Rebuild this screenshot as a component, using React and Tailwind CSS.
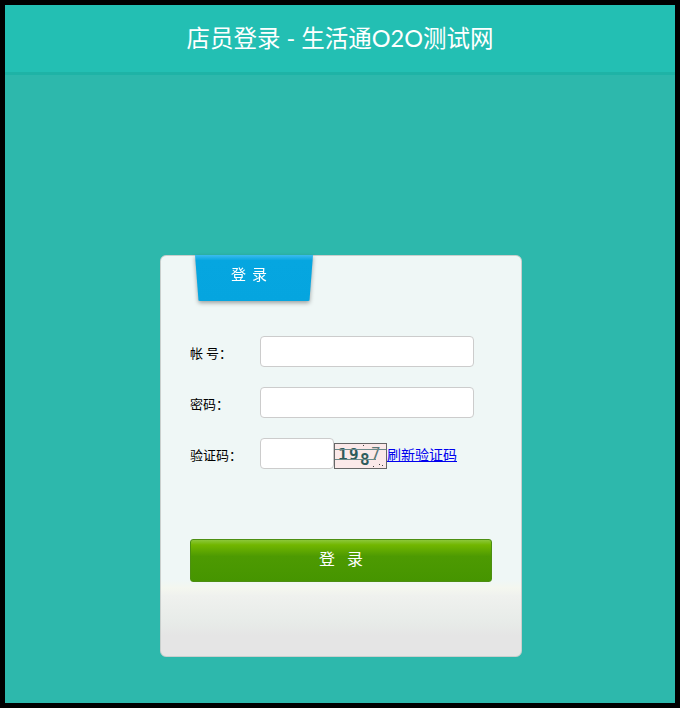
export default function App() {
    const font = { fontFamily: '"Noto Sans CJK SC", sans-serif' };
    return (
        <div className="w-[680px] h-[708px] bg-black p-[5px]">
            <div className="flex flex-col h-full">
                {/* 顶部标题 */}
                <header className="h-[70px] shrink-0 bg-[#23bfb3] border-b-[3px] border-[#1eb3a6] flex items-center justify-center">
                    <h1 className="text-white text-[23.5px] font-['Lato','Noto_Sans_CJK_SC',sans-serif] leading-none">
                        店员登录 - 生活通O2O测试网
                    </h1>
                </header>

                <div className="flex-1 bg-[#2db8ac] pt-[180px] pl-[155px]">
                    {/* 登录卡片 */}
                    <div className="w-[362px] h-[402px] rounded-[6px] border border-[#c9cfcd] bg-[linear-gradient(to_bottom,#eff7f6_0%,#eff7f6_81%,#f4f7ef_83%,#eff1ee_85%,#e8ece9_91%,#e5e5e5_95%,#e5e5e5_100%)] flex flex-col">
                        <div className="ml-[34px] w-[120px] -mt-px drop-shadow-[0_2px_2px_rgba(0,0,0,0.35)]">
                            <div
                                className="w-[118px] h-[46px] bg-[linear-gradient(to_bottom,#3cbbef_0%,#06a6e0_12%,#05a5df_100%)] rounded-b-[5px] flex items-center justify-center text-white text-[15px] tracking-[6px] [clip-path:polygon(0_0,100%_0,97%_100%,3%_100%)]"
                                style={font}
                            >
                                <span className="-mt-[8px] -ml-[4px]">登录</span>
                            </div>
                        </div>

                        <div className="pl-[29px] pt-[35px] flex flex-col gap-[20px] text-[13px] text-black" style={font}>
                            <div className="flex items-center h-[31px]">
                                <span className="w-[70px] pt-[2px]">帐 号：</span>
                                <input className="w-[214px] h-[31px] bg-white border border-[#cccccc] rounded-[4px] outline-none" />
                            </div>
                            <div className="flex items-center h-[31px]">
                                <span className="w-[70px] pt-[2px]">密码：</span>
                                <input type="password" className="w-[214px] h-[31px] bg-white border border-[#cccccc] rounded-[4px] outline-none" />
                            </div>
                            <div className="flex items-center h-[31px]">
                                <span className="w-[70px] pt-[2px]">验证码：</span>
                                <input className="w-[74px] h-[31px] bg-white border border-[#cccccc] rounded-[4px] outline-none" />
                                {/* 验证码图片 */}
                                <div className="relative w-[53px] h-[26px] mt-[4px] bg-[#fbe9e9] border border-[#666] overflow-hidden">
                                    <span className="absolute left-[3px] top-[3px] text-[#2f5c5c] font-['DejaVu_Sans_Mono',monospace] font-bold text-[16px] leading-none">
                                        1
                                    </span>
                                    <span className="absolute left-[14px] top-[3px] text-[#2f5c5c] font-['DejaVu_Sans_Mono',monospace] font-bold text-[16px] leading-none">
                                        9
                                    </span>
                                    <span className="absolute left-[25px] top-[8px] text-[#2f5c5c] font-['DejaVu_Sans_Mono',monospace] font-bold text-[16px] leading-none">
                                        8
                                    </span>
                                    <span className="absolute left-[36px] top-[2px] text-[#5c7878] font-['DejaVu_Sans_Mono',monospace] text-[16px] leading-none">
                                        7
                                    </span>
                                    <span className="absolute left-0 right-0 top-[5px] h-px bg-[#6a8a8a]" />
                                    <span className="absolute left-0 right-[10px] top-[15px] h-px bg-[#6a8a8a]" />
                                    <span className="absolute left-[28px] top-[1px] w-px h-px bg-[#444]" />
                                    <span className="absolute left-[44px] top-[20px] w-px h-px bg-[#444]" />
                                    <span className="absolute left-[47px] top-[21px] w-px h-px bg-[#444]" />
                                    <span className="absolute left-[38px] top-[22px] w-px h-px bg-[#444]" />
                                </div>
                                <a href="#" className="text-[#0000ee] underline pt-[2px] text-[14px]">
                                    刷新验证码
                                </a>
                            </div>
                        </div>

                        <div className="pl-[29px] pt-[70px]">
                            <button
                                className="w-[302px] h-[43px] rounded-[3px] border border-[#4c8f12] bg-[linear-gradient(to_bottom,#8cc73a_0%,#72b600_12%,#4d9a02_40%,#469500_100%)] text-white text-[16px] tracking-[12px] pl-[12px] pb-[6px]"
                                style={font}
                            >
                                登录
                            </button>
                        </div>
                    </div>
                </div>
            </div>
        </div>
    );
}
